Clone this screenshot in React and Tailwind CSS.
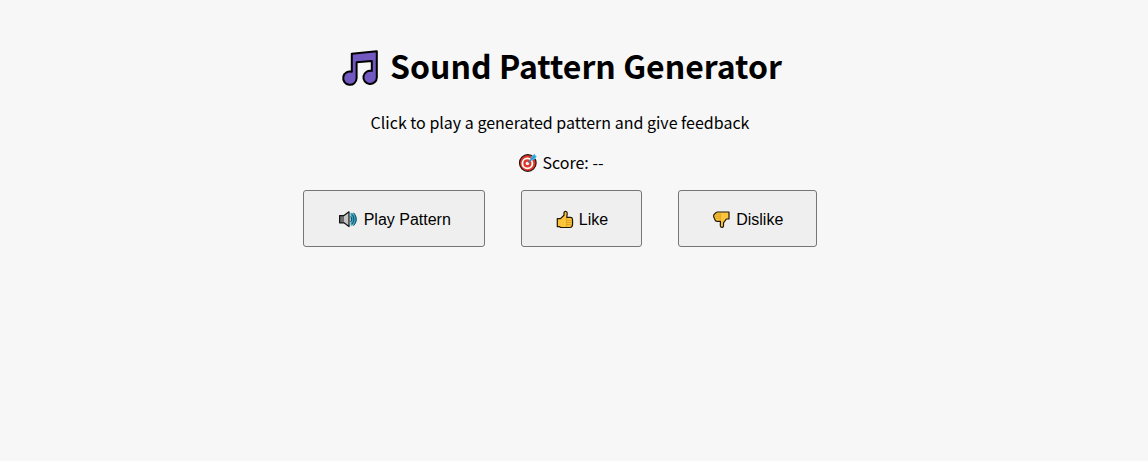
import { useState } from 'react';

function NotesIcon() {
  return (
    <svg viewBox="-3 -6 42 44" className="h-11 w-[42px] shrink-0" aria-hidden="true">
      <path
        d="M10.800 4.700 35.800 2.300V28.400a6.700 6.700 0 1 1-5-6.500V12L15.600 13.300V29.300a6.700 6.700 0 1 1-4.800-6.600Z"
        fill="#7159c1"
        stroke="#000"
        strokeWidth="2"
        strokeLinejoin="round"
      />
    </svg>
  );
}

function TargetIcon() {
  return (
    <svg viewBox="-2 -2 22 22" className="h-[22px] w-[22px] shrink-0" aria-hidden="true">
      <circle cx="9.800" cy="10" r="8.300" fill="#e0392b" stroke="#2a0f0c" strokeWidth="1.200" />
      <circle cx="9.400" cy="10.400" r="5" fill="none" stroke="#fff" strokeWidth="1.800" />
      <circle cx="9.400" cy="10.400" r="1.700" fill="#fff" />
      <path d="m9.600 10.200 3-4.200.8-2.800L16.800.8l.4 1.600 1.600.8-2.400 3.400-2.800.8Z" fill="#35b5ea" />
      <path d="m9.600 10.200 7.200-7.400" stroke="#1c6f9e" strokeWidth=".7" />
    </svg>
  );
}

function SpeakerIcon() {
  return (
    <svg viewBox="-1 0 23 22" className="h-[22px] w-[23px] shrink-0" aria-hidden="true">
      <path d="M12.500 3.800c3.400-.4 6.200 2.800 6.200 6.400s-2.800 6.800-6.200 6.400Z" fill="#39a9c9" />
      <path d="M1.600 6.600H6v7.200H1.600Z" fill="#6d6d6d" />
      <path d="M6 6.600 11 2.800v14.800L6 13.800Z" fill="#c4c4c4" />
      <path d="M1.600 6.600H6l5-3.800v14.800L6 13.800H1.600Z" fill="none" stroke="#111" strokeWidth="1.200" strokeLinejoin="round" />
      <path d="M12.800 7.800c1.300 1.400 1.300 3.400 0 4.800M14.200 5.800c2.300 2.600 2.300 6.200 0 8.800M15.800 4c3.300 3.600 3.300 8.800 0 12.400" fill="none" stroke="#12333e" strokeWidth=".9" strokeLinecap="round" />
    </svg>
  );
}

function ThumbUpIcon() {
  return (
    <svg viewBox="0 0 20 22" className="h-[22px] w-5 shrink-0" aria-hidden="true">
      <path
        d="M2.300 9.600h3.200L9 6.200V3.800c0-2 3.200-1.800 3.200.4L11.800 8.400h3.600c1.400 0 2 .7 2.100 1.800l.1 4.600c0 2-1 3.700-2.800 3.700H5.600l-1-.8H2.300Z"
        fill="#fcc43a"
        stroke="#1d1608"
        strokeWidth="1.200"
        strokeLinejoin="round"
      />
      <path d="M11.600 8.800v8.800M12 11.300h5M12 13.500h5M12 15.700h4.600" fill="none" stroke="#c48a12" strokeWidth=".6" />
    </svg>
  );
}

function ThumbDownIcon() {
  return (
    <svg viewBox="0 0 20 22" className="h-[22px] w-5 shrink-0" aria-hidden="true">
      <path
        d="M17 3v7h-2.600l-2.900 3.800v3c0 2.200-3.200 2.200-3.200-.2l.2-4.200H5.200c-1.400 0-2-.6-2.200-1.600L1.600 7.400c-.2-1.200.2-1.800 1-2.400L4 3.600C4.400 3.200 5 3 5.600 3Z"
        fill="#fcc43a"
        stroke="#1d1608"
        strokeWidth="1.200"
        strokeLinejoin="round"
      />
      <path d="M8.200 11.400V4.500M2.400 9.200h5.400M2.600 7.200h5.200M4 5.200h3.800" fill="none" stroke="#c48a12" strokeWidth=".6" />
    </svg>
  );
}

function ActionButton({ icon, children, onClick }) {
  return (
    <button
      type="button"
      onClick={onClick}
      className="flex items-center gap-1 rounded-[3px] border border-[#767676] bg-[#efefef] px-[33px] pt-[17px] pb-[14px] font-['Liberation_Sans',Arial,sans-serif] text-base leading-6 text-black hover:bg-[#e5e5e5]"
    >
      {icon}
      <span>{children}</span>
    </button>
  );
}

export default function App() {
  const [score, setScore] = useState(null);
  const rate = (delta) => setScore((current) => (current ?? 0) + delta);

  return (
    <main className="flex min-h-screen flex-col items-center bg-[#f7f7f7] pt-10 pr-7 font-['Noto_Sans_CJK_JP','Noto_Sans_CJK_SC',sans-serif] text-black">
      <h1 className="flex items-center gap-[10px] text-[32px] leading-[50px] font-bold">
        <NotesIcon />
        <span>Sound Pattern Generator</span>
      </h1>
      <p className="mt-[19px] text-base leading-[26px]">Click to play a generated pattern and give feedback</p>
      <p className="mt-[14px] flex items-center gap-1 text-base leading-[26px]">
        <TargetIcon />
        <span>Score: {score ?? '--'}</span>
      </p>
      <div className="mt-[15px] flex flex-wrap justify-center gap-9">
        <ActionButton icon={<SpeakerIcon />}>Play Pattern</ActionButton>
        <ActionButton icon={<ThumbUpIcon />} onClick={() => rate(1)}>Like</ActionButton>
        <ActionButton icon={<ThumbDownIcon />} onClick={() => rate(-1)}>Dislike</ActionButton>
      </div>
    </main>
  );
}
